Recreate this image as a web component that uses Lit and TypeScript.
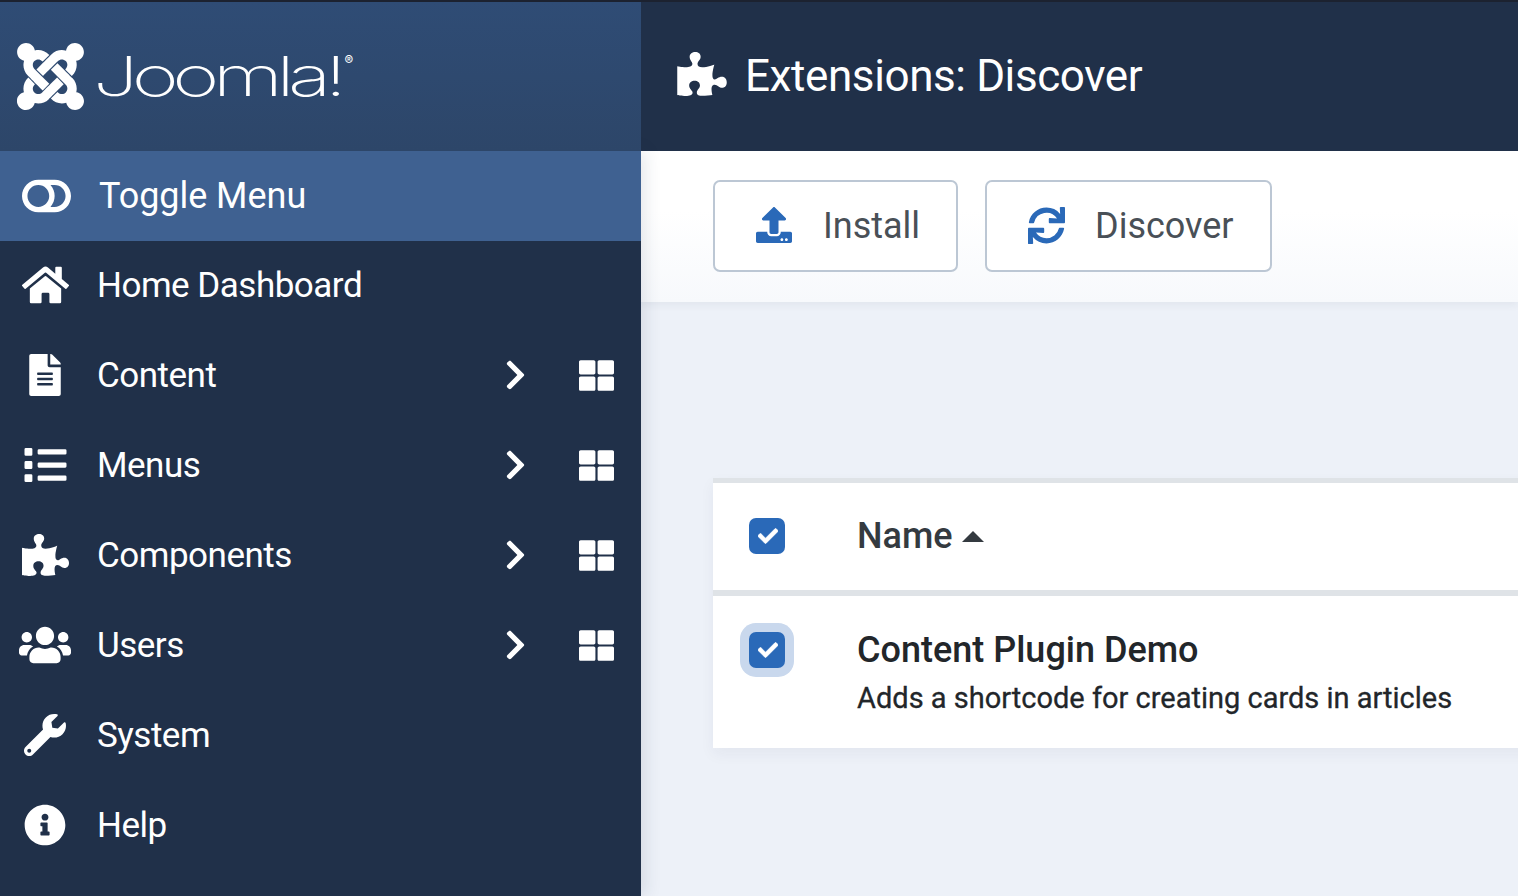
import { LitElement, html, css, svg } from "lit";
import { customElement } from "lit/decorators.js";

const P = {
  joomla: [448, "M.6 92.1C.6 58.8 27.4 32 60.4 32c30 0 54.5 21.9 59.2 50.2 32.6-7.6 67.1.6 96.5 30l-44.3 44.3c-20.5-20.5-42.6-16.3-55.4-3.5-14.3 14.3-14.3 37.9 0 52.2l99.5 99.5-44 44.3c-87.7-87.2-49.7-49.7-99.8-99.7-26.8-26.5-35-64.8-24.8-98.9C20.4 144.6.6 120.7.6 92.1zm129.5 116.4l44.3 44.3c10-10 89.7-89.7 99.7-99.8 14.3-14.3 37.6-14.3 51.9 0 12.8 12.8 17 35-3.5 55.4l44 44.3c31.2-31.2 38.5-67.6 28.9-101.2 29.2-4.1 51.9-29.2 51.9-59.5 0-33.2-26.8-60.1-59.8-60.1-30.3 0-55.4 22.5-59.5 51.6-33.8-9.9-71.7-1.5-98.3 25.1-18.3 19.1-71.1 71.5-99.6 99.9zm266.3 152.2c8.2-32.7-.9-68.5-26.3-93.9-11.8-12.2 5 4.7-99.5-99.7l-44.3 44.3 99.7 99.7c14.3 14.3 14.3 37.6 0 51.9-12.8 12.8-35 17-55.4-3.5l-44 44.3c27.6 30.2 68 38.8 102.7 28 5.5 27.4 29.7 48.1 58.9 48.1 33 0 59.8-26.8 59.8-60.1 0-30.2-22.5-55-51.6-59.1zm-84.3-53.1l-44-44.3c-87.2 86.4-50.4 50.4-99.7 99.8-14.3 14.3-37.6 14.3-51.9 0-13.1-13.4-16.9-35.3 3.2-55.4l-44-44.3c-30.2 30.2-38 65.2-29.5 98.3-26.7 6-46.8 29.9-46.8 58.2C0 453.2 26.8 480 59.8 480c28.6 0 52.5-19.8 58.6-46.7 32.7 8.2 68.5-.6 94.2-26 32.1-32 12.2-12.4 99.5-99.7z"],
  toggle: [576, "M384 64H192C85.961 64 0 149.961 0 256s85.961 192 192 192h192c106.039 0 192-85.961 192-192S490.039 64 384 64zM64 256c0-70.741 57.249-128 128-128 70.741 0 128 57.249 128 128 0 70.741-57.249 128-128 128-70.741 0-128-57.249-128-128zm320 128h-48.905c65.217-72.858 65.236-183.12 0-256H384c70.741 0 128 57.249 128 128 0 70.74-57.249 128-128 128z"],
  home: [576, "M280.37 148.26L96 300.11V464a16 16 0 0 0 16 16l112.06-.29a16 16 0 0 0 15.92-16V368a16 16 0 0 1 16-16h64a16 16 0 0 1 16 16v95.64a16 16 0 0 0 16 16.05L464 480a16 16 0 0 0 16-16V300L295.67 148.26a12.19 12.19 0 0 0-15.3 0zM571.6 251.47L488 182.56V44.05a12 12 0 0 0-12-12h-56a12 12 0 0 0-12 12v72.61L318.47 43a48 48 0 0 0-61 0L4.34 251.47a12 12 0 0 0-1.6 16.9l25.5 31A12 12 0 0 0 45.15 301l235.22-193.74a12.19 12.19 0 0 1 15.3 0L530.9 301a12 12 0 0 0 16.9-1.6l25.5-31a12 12 0 0 0-1.7-16.93z"],
  file: [384, "M224 136V0H24C10.7 0 0 10.7 0 24v464c0 13.3 10.7 24 24 24h336c13.3 0 24-10.7 24-24V160H248c-13.2 0-24-10.8-24-24zm64 236c0 6.6-5.4 12-12 12H108c-6.6 0-12-5.4-12-12v-8c0-6.6 5.4-12 12-12h168c6.6 0 12 5.4 12 12v8zm0-64c0 6.6-5.4 12-12 12H108c-6.6 0-12-5.4-12-12v-8c0-6.6 5.4-12 12-12h168c6.6 0 12 5.4 12 12v8zm0-72v8c0 6.6-5.4 12-12 12H108c-6.6 0-12-5.4-12-12v-8c0-6.6 5.4-12 12-12h168c6.6 0 12 5.4 12 12zm96-114.1v6.1H256V0h6.1c6.4 0 12.5 2.5 17 7l97.9 98c4.5 4.5 7 10.6 7 16.9z"],
  list: [512, "M80 368H16a16 16 0 0 0-16 16v64a16 16 0 0 0 16 16h64a16 16 0 0 0 16-16v-64a16 16 0 0 0-16-16zm0-320H16A16 16 0 0 0 0 64v64a16 16 0 0 0 16 16h64a16 16 0 0 0 16-16V64a16 16 0 0 0-16-16zm0 160H16a16 16 0 0 0-16 16v64a16 16 0 0 0 16 16h64a16 16 0 0 0 16-16v-64a16 16 0 0 0-16-16zm416 176H176a16 16 0 0 0-16 16v32a16 16 0 0 0 16 16h320a16 16 0 0 0 16-16v-32a16 16 0 0 0-16-16zm0-320H176a16 16 0 0 0-16 16v32a16 16 0 0 0 16 16h320a16 16 0 0 0 16-16V80a16 16 0 0 0-16-16zm0 160H176a16 16 0 0 0-16 16v32a16 16 0 0 0 16 16h320a16 16 0 0 0 16-16v-32a16 16 0 0 0-16-16z"],
  puzzle: [576, "M519.442 288.651c-41.519 0-59.5 31.593-82.058 31.593C377.409 320.244 432 144 432 144s-196.288 80-196.288-3.297c0-35.827 36.288-46.25 36.288-85.985C272 19.216 243.885 0 210.539 0c-34.654 0-66.366 18.891-66.366 56.346 0 41.364 31.711 59.277 31.711 81.75C175.885 207.719 0 166.758 0 166.758v333.237s178.635 41.047 178.635-28.662c0-22.473-40-40.107-40-81.471 0-37.456 29.25-56.346 63.577-56.346 33.673 0 61.788 19.216 61.788 54.717 0 39.735-36.288 50.158-36.288 85.985 0 60.803 129.675 25.73 181.23 25.73 0 0-34.725-120.101 25.827-120.101 35.962 0 46.423 36.152 86.308 36.152C556.712 416 576 387.99 576 354.443c0-34.199-18.962-65.792-56.558-65.792z"],
  users: [640, "M96 224c35.3 0 64-28.7 64-64s-28.7-64-64-64-64 28.7-64 64 28.7 64 64 64zm448 0c35.3 0 64-28.7 64-64s-28.7-64-64-64-64 28.7-64 64 28.7 64 64 64zm32 32h-64c-17.6 0-33.5 7.1-45.1 18.6 40.3 22.1 68.9 62 75.1 109.4h66c17.7 0 32-14.3 32-32v-32c0-35.3-28.7-64-64-64zm-256 0c61.9 0 112-50.1 112-112S381.9 32 320 32 208 82.1 208 144s50.1 112 112 112zm76.8 32h-8.3c-20.8 10-43.9 16-68.5 16s-47.6-6-68.5-16h-8.3C179.6 288 128 339.6 128 403.2V432c0 26.5 21.5 48 48 48h288c26.5 0 48-21.5 48-48v-28.8c0-63.6-51.6-115.2-115.2-115.2zm-223.7-13.4C161.5 263.1 145.6 256 128 256H64c-35.3 0-64 28.7-64 64v32c0 17.7 14.3 32 32 32h65.9c6.3-47.4 34.9-87.3 75.2-109.4z"],
  wrench: [512, "M507.73 109.1c-2.24-9.03-13.54-12.09-20.12-5.51l-74.36 74.36-67.88-11.31-11.31-67.88 74.36-74.36c6.62-6.62 3.43-17.9-5.66-20.16-47.38-11.74-99.55.91-136.58 37.93-39.64 39.64-50.55 97.1-34.05 147.2L18.74 402.76c-24.99 24.99-24.99 65.51 0 90.5 24.99 24.99 65.51 24.99 90.5 0l213.21-213.21c50.12 16.71 107.47 5.68 147.37-34.22 37.07-37.07 49.7-89.32 37.91-136.73zM64 472c-13.25 0-24-10.75-24-24 0-13.26 10.75-24 24-24s24 10.74 24 24c0 13.25-10.75 24-24 24z"],
  info: [512, "M256 8C119.043 8 8 119.083 8 256c0 136.997 111.043 248 248 248s248-111.003 248-248C504 119.083 392.957 8 256 8zm0 110c23.196 0 42 18.804 42 42s-18.804 42-42 42-42-18.804-42-42 18.804-42 42-42zm56 254c0 6.627-5.373 12-12 12h-88c-6.627 0-12-5.373-12-12v-24c0-6.627 5.373-12 12-12h12v-64h-12c-6.627 0-12-5.373-12-12v-24c0-6.627 5.373-12 12-12h64c6.627 0 12 5.373 12 12v100h12c6.627 0 12 5.373 12 12v24z"],
  chevron: [320, "M285.476 272.971L91.132 467.314c-9.373 9.373-24.569 9.373-33.941 0l-22.667-22.667c-9.357-9.357-9.375-24.522-.04-33.901L188.505 256 34.484 101.255c-9.335-9.379-9.317-24.544.04-33.901l22.667-22.667c9.373-9.373 24.569-9.373 33.941 0L285.475 239.03c9.373 9.372 9.373 24.568.001 33.941z"],
  grid: [512, "M296 32h192c13.255 0 24 10.745 24 24v160c0 13.255-10.745 24-24 24H296c-13.255 0-24-10.745-24-24V56c0-13.255 10.745-24 24-24zm-80 0H24C10.745 32 0 42.745 0 56v160c0 13.255 10.745 24 24 24h192c13.255 0 24-10.745 24-24V56c0-13.255-10.745-24-24-24zM0 296v160c0 13.255 10.745 24 24 24h192c13.255 0 24-10.745 24-24V296c0-13.255-10.745-24-24-24H24c-13.255 0-24 10.745-24 24zm296 184h192c13.255 0 24-10.745 24-24V296c0-13.255-10.745-24-24-24H296c-13.255 0-24 10.745-24 24v160c0 13.255 10.745 24 24 24z"],
  sync: [512, "M440.65 12.57l4 82.77A247.16 247.16 0 0 0 255.83 8C134.73 8 33.91 94.92 12.29 209.82A12 12 0 0 0 24.09 224h49.05a12 12 0 0 0 11.67-9.26 175.91 175.91 0 0 1 317-56.94l-101.46-4.86a12 12 0 0 0-12.57 12v47.41a12 12 0 0 0 12 12H500a12 12 0 0 0 12-12V12a12 12 0 0 0-12-12h-47.37a12 12 0 0 0-11.98 12.57zM255.83 432a175.61 175.61 0 0 1-146-77.8l101.8 4.87a12 12 0 0 0 12.57-12v-47.4a12 12 0 0 0-12-12H12a12 12 0 0 0-12 12V500a12 12 0 0 0 12 12h47.35a12 12 0 0 0 12-12.6l-4.15-82.57A247.17 247.17 0 0 0 255.83 504c121.11 0 221.93-86.92 243.55-201.82a12 12 0 0 0-11.8-14.18h-49.05a12 12 0 0 0-11.67 9.26A175.86 175.86 0 0 1 255.83 432z"],
  upload: [512, "M296 384h-80c-13.3 0-24-10.7-24-24V192h-87.7c-17.8 0-26.7-21.5-14.1-34.1L242.3 5.7c7.5-7.5 19.8-7.5 27.3 0l152.2 152.2c12.6 12.6 3.7 34.1-14.1 34.1H320v168c0 13.3-10.7 24-24 24zm216-8v112c0 13.3-10.7 24-24 24H24c-13.3 0-24-10.7-24-24V376c0-13.3 10.7-24 24-24h136v8c0 30.9 25.1 56 56 56h80c30.9 0 56-25.1 56-56v-8h136c13.3 0 24 10.7 24 24zm-124 88c0-11-9-20-20-20s-20 9-20 20 9 20 20 20 20-9 20-20zm64 0c0-11-9-20-20-20s-20 9-20 20 9 20 20 20 20-9 20-20z"],
  check: [512, "M173.898 439.404l-166.4-166.4c-9.997-9.997-9.997-26.206 0-36.204l36.203-36.204c9.997-9.998 26.207-9.998 36.204 0L192 312.69 432.095 72.596c9.997-9.997 26.207-9.997 36.204 0l36.203 36.204c9.997 9.997 9.997 26.206 0 36.204l-294.4 294.401c-9.998 9.997-26.207 9.997-36.204-.001z"],
} as const;

type IconName = keyof typeof P;

function icon(name: IconName, cls: string) {
  const [w, d] = P[name];
  return html`<svg class=${cls} viewBox="0 0 ${w} 512" fill="currentColor" aria-hidden="true">${svg`<path d=${d}></path>`}</svg>`;
}

const MENU: { label: string; ic: IconName; cls: string; more?: boolean }[] = [
  { label: "Home Dashboard", ic: "home", cls: "i-home" },
  { label: "Content", ic: "file", cls: "i-file", more: true },
  { label: "Menus", ic: "list", cls: "i-list", more: true },
  { label: "Components", ic: "puzzle", cls: "i-puzzle", more: true },
  { label: "Users", ic: "users", cls: "i-users", more: true },
  { label: "System", ic: "wrench", cls: "i-wrench" },
  { label: "Help", ic: "info", cls: "i-info" },
];

@customElement("app-root")
export class AppRoot extends LitElement {
  static styles = css`
    :host {
      display: block;
      height: 896px;
      overflow: hidden;
      font-family: Roboto, "Liberation Sans", sans-serif;
      background: #edf1f8;
    }
    .page {
      height: 896px;
      display: grid;
      grid-template-columns: 641px 1fr;
      grid-template-rows: 149px 1fr;
      border-top: 2px solid #1c2230;
      box-sizing: border-box;
    }
    .brand {
      background: linear-gradient(180deg, #2f4c75, #2d4669);
      display: flex;
      align-items: center;
      padding-left: 17px;
      box-sizing: border-box;
      color: #fff;
      position: relative;
      z-index: 3;
    }
    .brand .mark { width: 67px; height: 77px; flex: none; }
    .word {
      font-family: Inter, Lato, sans-serif;
      font-weight: 200;
      font-size: 55px;
      letter-spacing: -4.4px;
      line-height: 1;
      margin-left: 9px;
      display: flex;
      align-items: flex-start;
      white-space: nowrap;
    }
    .word .stretch { display: inline-block; transform: scaleX(1.46); transform-origin: left center; }
    .word sup {
      font-size: 13px;
      font-weight: 400;
      letter-spacing: 0;
      margin-left: 82px;
      margin-top: 5px;
      line-height: 1;
    }
    .head {
      background: #203049;
      color: #fff;
      display: flex;
      align-items: center;
      padding-left: 36px;
      padding-bottom: 2px;
      box-sizing: border-box;
    }
    .head svg { width: 50px; height: 44px; flex: none; margin-right: 18px; margin-bottom: 3px; }
    h1 { margin: 0; font-weight: 400; font-size: 44px; line-height: 1; letter-spacing: -0.4px; white-space: nowrap; }
    .side {
      background: #203049;
      color: #fff;
      position: relative;
      z-index: 2;
      box-shadow: 4px 0 16px rgba(32, 48, 73, 0.12);
    }
    .row {
      height: 90px;
      display: flex;
      align-items: center;
      font-size: 35px;
      white-space: nowrap;
      padding-bottom: 2px;
      box-sizing: border-box;
    }
    .row.toggle { background: #3f6191; font-size: 36px; padding-bottom: 0; }
    .ico { width: 97px; flex: none; display: flex; justify-content: center; padding-right: 7px; box-sizing: border-box; }
    .toggle .ico { width: 99px; padding-right: 6px; }
    .label { flex: 1; letter-spacing: -0.5px; }
    .toggle .label { letter-spacing: -0.05px; }
    .i-toggle { width: 49px; height: 44px; }
    .i-home { width: 47px; height: 42px; }
    .i-file { width: 32px; height: 42px; }
    .i-list { width: 43px; height: 42px; }
    .i-puzzle { width: 47px; height: 42px; }
    .i-users { width: 52px; height: 42px; }
    .i-wrench { width: 42px; height: 42px; }
    .i-info { width: 42px; height: 42px; }
    .chev { width: 21px; height: 34px; margin-right: 53px; flex: none; }
    .grid { width: 35px; height: 35px; margin-right: 27px; flex: none; }
    .main { min-width: 0; overflow: hidden; }
    .toolbar {
      height: 151px;
      background: linear-gradient(180deg, #fff 40%, #f7f9fc);
      box-shadow: 0 3px 8px rgba(32, 48, 73, 0.06);
      display: flex;
      gap: 27px;
      padding: 29px 0 0 72px;
      box-sizing: border-box;
    }
    .btn {
      height: 92px;
      box-sizing: border-box;
      border: 2px solid #bcc7d4;
      border-radius: 7px;
      background: #fff;
      display: flex;
      align-items: center;
      color: #495057;
      font-size: 36px;
    }
    .btn.install { width: 245px; padding-left: 41px; gap: 31px; }
    .btn.discover { width: 287px; padding-left: 41px; gap: 30px; }
    .btn svg { width: 37px; height: 37px; color: #2a69b8; flex: none; margin-bottom: 2px; }
    .btn.install svg { width: 36px; height: 36px; }
    .card {
      margin: 176px 0 0 72px;
      width: 1000px;
      background: #fff;
      box-shadow: 0 6px 14px rgba(32, 48, 73, 0.05);
    }
    .thead {
      height: 118px;
      box-sizing: border-box;
      border-top: 5px solid #dfe3e7;
      border-bottom: 6px solid #dfe3e7;
      padding-bottom: 2px;
      display: flex;
      align-items: center;
      color: #343a40;
      font-size: 36px;
      font-weight: 500;
    }
    .cell-c { width: 145px; flex: none; padding-left: 36px; box-sizing: border-box; }
    .cb {
      width: 36px;
      height: 36px;
      border-radius: 7px;
      background: #2a69b8;
      display: flex;
      align-items: center;
      justify-content: center;
      color: #fff;
    }
    .cb svg { width: 20px; height: 20px; margin-left: 2px; stroke: currentColor; stroke-width: 16; }
    .cb.focus { box-shadow: 0 0 0 9px #c9d8ed; }
    .caret {
      display: inline-block;
      width: 0;
      height: 0;
      margin-left: 9px;
      vertical-align: 6px;
      border-left: 11px solid transparent;
      border-right: 11px solid transparent;
      border-bottom: 11px solid #343a40;
    }
    .trow { height: 152px; display: flex; align-items: flex-start; }
    .trow .cell-c { padding-top: 36px; }
    .name { font-size: 36px; font-weight: 500; color: #22262a; line-height: 42px; margin-top: 33px; margin-left: -1px; white-space: nowrap; }
    .desc { font-size: 29px; color: #22262a; line-height: 34px; margin-top: 10px; margin-left: -1px; white-space: nowrap; -webkit-text-stroke: 0.3px #22262a; }
    .thead .cell-c + div { margin-left: -1px; }
  `;

  render() {
    return html`
      <div class="page">
        <div class="brand">
          ${icon("joomla", "mark")}
          <div class="word"><span class="stretch">Joomla!</span><sup>®</sup></div>
        </div>
        <div class="head">${icon("puzzle", "")}<h1>Extensions: Discover</h1></div>
        <nav class="side">
          <div class="row toggle">
            <span class="ico">${icon("toggle", "i-toggle")}</span>
            <span class="label">Toggle Menu</span>
          </div>
          ${MENU.map(
            (m) => html`<div class="row">
              <span class="ico">${icon(m.ic, m.cls)}</span>
              <span class="label">${m.label}</span>
              ${m.more ? html`${icon("chevron", "chev")}${icon("grid", "grid")}` : ""}
            </div>`
          )}
        </nav>
        <main class="main">
          <div class="toolbar">
            <div class="btn install">${icon("upload", "")}<span>Install</span></div>
            <div class="btn discover">${icon("sync", "")}<span>Discover</span></div>
          </div>
          <section class="card">
            <div class="thead">
              <div class="cell-c"><div class="cb">${icon("check", "")}</div></div>
              <div>Name<span class="caret"></span></div>
            </div>
            <div class="trow">
              <div class="cell-c"><div class="cb focus">${icon("check", "")}</div></div>
              <div>
                <div class="name">Content Plugin Demo</div>
                <div class="desc">Adds a shortcode for creating cards in articles</div>
              </div>
            </div>
          </section>
        </main>
      </div>
    `;
  }
}
